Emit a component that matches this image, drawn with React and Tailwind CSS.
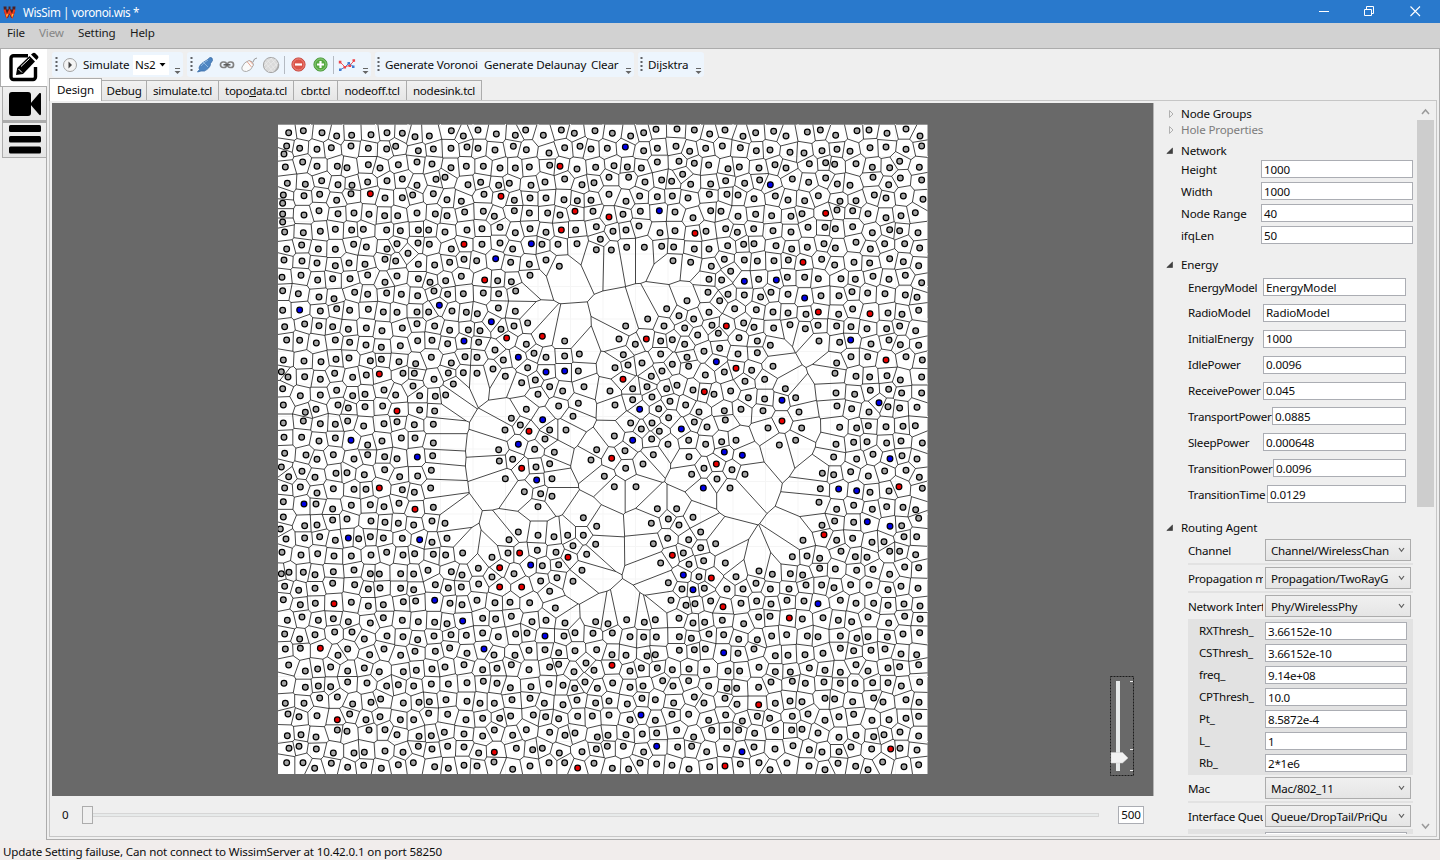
import React from "react";

/* ---------- sensor field data: one block per quadrant, units are thirds of a pixel ---------- */
const QUADRANTS = [
  {
    ox: 0,
    oy: 0,
    nodes: `32,26 76,20 132,26 176,36 221,34 279,32 327,26 373,28 411,38 454,36 520,20 556,36 600,18 655,30 712,34 743,18 796,34 850,18 889,28 951,20
26,66 18,90 65,73 117,76 160,71 219,66 271,73 326,75 353,67 421,80 466,75 519,73 567,69 600,73 651,78 706,67 745,77 813,87 860,71 906,67 939,75
22,129 74,114 117,127 178,127 207,131 271,122 306,132 361,122 417,114 462,120 519,131 565,127 616,127 666,132 712,132 754,129 815,124 846,127,r 897,135 953,130
28,178 82,181 131,170 180,182 222,184 269,174 327,170 373,165 417,184 474,166 501,160 570,182 608,175 662,184 694,178 759,184 801,174 860,165 912,182 948,176
16,213 14,238 78,215 125,211 176,229 219,209 277,209,r 321,222 373,221 404,213 466,209 507,227 550,232 618,211 669,217,r 709,229 756,222 804,222 858,227 898,230 939,229
14,270 14,294 78,273 123,260 180,269 228,267 273,271 320,275 359,275 417,267 472,270 507,275 560,264 616,262 649,277 709,260 754,267 809,267 846,273 891,262,r 945,262
20,324 76,326 127,322 172,316 221,318 256,316 326,318 367,320 421,318 452,318 501,324 567,318 612,314 666,310 712,326 756,314 804,325 850,318,r 893,318 955,308
26,375 71,363 121,375 172,376 227,361 265,369 327,375 357,359 390,388 420,357 454,361 520,375 558,361,r 612,361 666,357 704,375 760,359,b 792,361 840,361 897,359 967,346 955,377
18,408 72,411 117,417 172,425 213,417 261,421 321,406 353,411 421,421 470,423 515,415 558,406 596,410 653,404,b 698,415 754,421 804,408 844,427
12,460 69,454 119,468 164,464 216,464 269,453 321,475 357,456 421,464 456,475 503,470 550,457 620,468,r 659,470 700,473 756,454
14,500 61,509 123,519 168,524 230,505 269,511 326,507 370,511 419,515 468,501 509,511 556,509 616,507 662,509 713,501
14,559 65,558,b 127,561 176,554 215,559 271,556 316,564 357,565 417,564 452,564 484,544,b 522,561 565,565 598,569 661,552 712,562
20,608 80,600 123,605 164,608 211,616 265,612 312,620 373,612 417,599 470,606 515,619 571,618 606,620 640,593,b 669,616 708,606 749,597
26,648 65,649 115,657 172,648 215,655 264,663 310,670 367,665 419,650 462,649 509,659 558,651,b 602,655 686,642,r 793,637,r 745,661 860,651
16,708 78,711 129,713 174,706 213,702 277,710 310,706 363,713 413,719 460,700 520,717 561,698 597,700 651,678 676,708 721,700,b 768,688 804,700 860,696 904,690
10,743 30,759 80,758 127,766 170,748 224,760 265,753 304,750,r 375,748 409,748 468,766 511,747 556,746 597,748 645,735 682,757 749,731 804,744,b 860,741,b 901,741
14,794 67,815 127,813 176,799 224,815 261,811 318,798 353,813 405,786 425,815 472,817 503,813 526,780 731,776 772,768 780,811 815,788 854,801 918,788
16,843 82,865 114,856 180,843 211,852 261,848 314,846 357,861,r 425,858 470,861 745,856 842,846 901,838 700,883
16,897 76,891 127,899 172,901 209,891 257,906 318,899 357,893 409,902 466,901 681,918 727,903 753,922,r 794,887,b 815,918 864,918 885,877
18,940 71,940 123,951 172,942 219,949,b 269,963 312,951 370,942 411,942 466,957 721,961,b 801,945`,
  },
  {
    ox: 975,
    oy: 0,
    nodes: `28,28 83,36 122,26 159,16 222,15 274,18 320,30 366,18 420,37 458,26 512,22 549,36 613,24 652,18 698,34 762,20 798,18 852,28 909,15 951,36
13,73 67,69,b 122,80 163,73 219,67 260,82 308,73 358,66 412,71 460,80 501,78 561,85 603,87 657,80 702,76 741,82 801,71 849,69 909,76 956,66
33,125 73,129 115,132 163,114 228,112 274,118 317,123 375,134 409,129 468,132 516,122 549,132 619,119 668,116 695,121 759,119 808,130 860,131 890,112 949,130
18,160 77,160 126,174 176,168 206,172 239,151 263,181 323,180 368,170 425,178 470,168 502,182,b 568,165 617,175 668,162 703,180 741,184 810,160 857,182 892,162 956,168
18,211 69,232 110,216 163,218 208,216 255,222 319,211 372,211 405,213 453,224 517,216 555,228 605,230 646,215 711,232 759,230 814,213 849,222 901,216 960,226
18,279,r 60,271 112,262 169,260,b 216,264 270,281 323,260 354,262 405,277 458,271 506,275 564,277 597,269 668,268,r 702,258 749,260 795,269 849,281 894,275 937,266
30,322 69,318 108,306 171,326 216,320 276,328,r 309,322 368,314 403,325 452,314 510,320 564,324 615,310 666,310 697,314 749,308 808,326 860,317 890,320 945,326
25,378 71,370 124,370 176,367 212,369 274,375 318,375 374,365 422,361 453,359 519,365 566,375 613,370 663,359 697,372 759,355 802,375 845,359 905,359 950,372
210,410 263,415 325,427 364,406 424,408 463,411 513,410 556,408 600,415,r 656,406 695,423 753,415 800,417 860,404 901,413 947,425 383,442
318,466 356,468 424,472,b 467,466 520,468,b 553,460 605,460 646,464 714,464 757,466 810,457 858,466 907,454 956,476
315,505 375,511 350,530 424,513 473,519 504,505 555,511 605,522,b 654,515 708,515 747,503 794,507 846,509 907,513 942,520 252,530
191,554 228,575 272,585 318,565 395,554 460,557 510,564 555,567 609,571 646,564,r 707,571 749,555 801,569,r 855,567 897,571 947,559 134,585
68,606 183,606 245,612 327,604 346,628 370,606,r 422,597 453,610 512,612 561,602 607,614 645,604 701,606 744,608 792,614 851,614 890,606 938,620 284,633
48,645 97,661 130,645,r 173,651 208,647 245,661 303,682 350,673 408,641 463,651 502,664 648,651 710,655 743,648,b 804,660 858,648 892,662 947,664
61,692 75,723 36,731 117,717 173,690 208,721 252,700 257,727 340,713,b 405,690 463,686 510,727 701,717 744,698 794,698 849,708,r 909,698 958,708
60,766,r 145,757 177,741 307,753 364,744 399,733,r 446,739 426,772 485,766 696,748 759,757 800,759 852,755 892,768 956,759
21,801 89,794 132,788 191,794 222,784 270,798 304,803,r 333,811 383,801 547,794 699,807 755,811 802,799 857,796 896,807 956,807
36,843 89,827 147,819 201,832 248,843 110,856,b 167,854 288,864 364,860 414,856 436,821 485,825 537,829,b 578,821 480,860 588,864 702,846 746,854 798,864 828,836,b 855,848 890,852 942,850
83,897 115,915 147,897 197,881 169,922 235,915,b 274,894 312,909 367,888 495,912 537,891,r 596,912 710,910 761,912 796,905 849,908 900,907 937,905
34,936 89,949,b 146,945 195,961 257,949 308,961 356,953 399,949 529,963 578,949 699,961 752,955 792,953 851,957 894,951 958,957`,
  },
  {
    ox: 0,
    oy: 975,
    nodes: `20,13 84,18 117,31 166,17 228,30 269,17 320,23 357,29 418,24,b 464,20 662,2 664,36 704,31 731,58,r 770,1 774,54 815,44 829,10 956,2 939,33
10,54 32,83 72,67 111,85 174,73 207,71 259,77 320,62 365,83 419,81 460,64 682,89 776,93,b 822,89
20,117 67,114 117,132 166,119 228,121 264,121 304,117,r 373,122 409,130 458,117 739,128 788,134 822,142
16,158 78,165,b 114,165 164,180 220,169 277,167 318,173 363,163 411,181,r 466,175 780,173
16,204 7,240 80,230 117,228 164,213 207,210 279,216 321,220 361,223 407,228 462,216 501,223 721,249 916,206 956,232
24,270 80,267 125,263 172,274 211,267,b 242,269 277,263 316,267 373,268 425,272,b 462,280 507,268 693,272 780,259 828,263 869,259 916,259 885,290 953,286
12,310 69,318 119,314 168,321 220,321 279,318 326,310 375,318 410,314 466,316 503,318 554,312 642,325 690,312 725,312,r 778,304 834,310 870,325,r 926,316
10,374 33,370 76,370 111,377 166,368 228,363 277,374 304,375 368,374 407,375 450,364 520,368 552,378 601,358 665,356,r 642,384 708,374 758,348,b 793,350 842,347 912,364
20,412 62,424 111,418 164,403 230,407 271,420 306,417 368,418 407,422 472,407 511,417 550,414 602,405 665,414,r 731,414,r 788,396 837,386 885,397
16,452 67,467 112,463 168,464,r 220,460 271,471 316,467 376,458 413,456 470,454,b 516,463 552,467 597,454 651,461 696,460 755,461 815,427 832,477
28,514 72,504 121,514 166,509 211,518 277,522 316,506 373,514 421,518 470,520 507,524 554,516,b 614,508 653,510 700,502 762,518 804,514 861,522 953,518
20,555 65,570 111,557 170,549 222,549 259,570 327,561 375,563 419,572 468,561 519,557 565,559 614,552 661,563 713,555 747,552 801,561,b 858,561 891,551 945,553
22,600 67,598 127,598,r 180,619 209,600 275,617 318,600 368,619 411,607 472,607 515,597 567,613 618,600,b 648,618 711,619 753,604 801,602 842,611 891,605 956,602
32,648 82,666 119,660 158,654 209,666 259,657 304,668 376,668 415,664 462,660 501,654 558,647 614,662 657,658 700,647 753,662 815,654 842,646 888,668 924,642 948,664
18,703 82,715 121,711 158,713 209,699 267,702 326,711 361,707 407,711 460,705 511,705 567,701 616,697 657,703 697,716 759,713 813,705 855,709 890,718 921,699 958,718
22,763 78,763 125,747 178,744 224,765 279,760 308,750 376,762 423,760 454,758 504,752 567,757 606,763 649,763 702,752 756,748 799,763 855,767 897,753 953,762
30,795 63,803 117,800 178,812,r 215,795 264,812 306,803 367,812 407,812 452,793 509,796 564,812 614,808 665,808 698,801 766,798 803,803 842,809 899,802 943,801
28,860 69,857 114,864 178,843 207,847 273,843 321,842 357,857 423,862 460,860 499,850 558,855 614,861 649,843 704,859 745,842 815,850 861,859 891,852 958,864
33,898 63,892 115,900 166,912 228,912 259,910 321,906 375,910 421,892 462,900 509,892 558,894 602,912 649,910,r 715,898 764,902 793,898 844,912 912,908 955,900
26,941 75,941 110,958 160,943 209,955 257,949 310,958 361,947 406,941 470,953 511,958 558,949 597,951 648,939 704,961 756,951 813,941 860,941 899,957,r 948,943`,
  },
  {
    ox: 975,
    oy: 975,
    nodes: `26,28,r 66,5 68,58 151,17 120,45 4,82 34,113 99,113 258,23 303,58 266,76 340,45,r 342,90 364,9,b 418,19,b 387,62 426,76 381,117 301,117,b 692,24 761,30 810,16 861,29,b 897,20 942,30
658,73 692,77 743,68 796,81 845,66 909,64 949,85
652,119 707,120,b 761,125,b 801,130 858,126 888,113,r 958,118
648,160 701,181 752,169 808,181 851,173 900,175 938,182 947,208
163,179 221,179 270,205 196,210 228,228 145,223
657,229 695,216 752,220 793,218,b 861,232,b 896,230 663,257,r
194,268 257,272 293,249 293,296 338,284 151,284 208,319,r 241,312 258,346 302,335 173,342 367,342 241,378,b 288,383 325,387,r 399,383 196,401 237,420 270,422,b 304,418 372,420 420,420
600,274 701,274 749,268 807,280 843,278 903,263 941,263
568,323 612,321 650,328 714,307 757,323 792,325 860,307 890,307 938,317
468,366 508,376 562,374 599,378 650,358 697,360 761,364 810,361 860,376 905,354 947,356
459,403 502,420 558,420 609,408 656,408 693,416 743,407 798,408 855,422 894,412 945,418
204,454 249,469 276,464 323,456 360,473,r 414,463 461,456 504,465 552,454 603,456 645,464,b 712,454 759,463 812,463 855,469 903,465 951,471
15,524 71,512 124,520 157,512 228,508 270,522 305,520 358,514 422,524 467,504 501,502 559,507,r 598,510 660,506 706,514 746,518 795,504 857,522 905,502 951,510
28,552 81,563 122,564 160,564 229,563 265,568 318,555 362,557 407,571 463,572 506,561 551,557 613,561 645,563 712,561 762,568 795,563 853,564 900,555 950,551
27,617 69,619 132,621 157,617 229,604 274,602 307,600 362,611,b 405,613 453,600 517,620 555,619 606,617 660,613 712,598 752,605 804,604 846,600 894,615 941,617
27,649,r 81,666 115,657 163,657 208,662 258,660 311,662 375,666 410,666 468,655 517,668 562,669 619,657 666,664 712,670 759,647 795,666 855,657 890,653 947,647
29,702 81,715 120,711 179,695 210,711 257,695 317,711 372,718 401,718 467,715 504,699 568,697 607,703 663,699 712,703 756,703 809,701 855,701 895,711 950,699
18,756 73,765 117,748 157,752 212,762 274,744 303,762 366,748 402,766 467,767,r 517,763 561,756 597,758 666,748 695,750 749,758 812,747 840,759 909,752 948,760
18,798 81,812 114,798,b 157,814 207,796 257,796 317,814 368,798 418,816 463,802 500,808 568,802 615,795 666,814 708,803 752,796 807,814 858,812 909,808 947,802
15,859 69,857 118,855 161,852 221,843 272,864 326,844 372,843 407,843 455,853 517,843 566,843 597,841 645,852 708,865 759,859 812,863 843,857 891,849 947,861
13,892 61,892 122,909 161,892,b 224,894 266,892 311,908 371,898 417,908,b 453,894 516,900 570,890 619,902 657,909 708,908 744,894 806,900 863,900,r 891,898 942,903
28,958 77,960 111,942 161,945 207,949 258,960 320,953 366,951,r 412,945 468,941 501,962 552,942 618,951 666,962 705,943 758,952 795,962 839,939 903,953 947,947`,
  },
];

const FILL = { r: "#e80000", b: "#0000e8" };

const NODES = QUADRANTS.flatMap(({ ox, oy, nodes }) =>
  nodes.split(/\s+/).map((t) => {
    const [x, y, kind] = t.split(",");
    return { x: (ox + Number(x)) / 3, y: (oy + Number(y)) / 3, fill: FILL[kind] || "#a6a6a6" };
  })
);

const FIELD = { x0: 0, y0: 0.7, x1: 649.5, y1: 650 };

/* Voronoi edges by clipping the field with the bisector of every pair of nodes. */
function voronoiPath(pts) {
  let d = "";
  pts.forEach((p, i) => {
    let poly = [
      { x: FIELD.x0, y: FIELD.y0, n: -1 },
      { x: FIELD.x1, y: FIELD.y0, n: -1 },
      { x: FIELD.x1, y: FIELD.y1, n: -1 },
      { x: FIELD.x0, y: FIELD.y1, n: -1 },
    ];
    let reach = Infinity;
    for (let j = 0; j < pts.length; j++) {
      if (j === i) continue;
      const q = pts[j];
      const nx = q.x - p.x;
      const ny = q.y - p.y;
      const dd = nx * nx + ny * ny;
      if (dd > reach || dd < 0.01) continue;
      const c = (q.x * q.x + q.y * q.y - p.x * p.x - p.y * p.y) / 2;
      const s = poly.map((v) => v.x * nx + v.y * ny - c);
      if (!s.some((v) => v > 0)) continue;
      const out = [];
      for (let k = 0; k < poly.length; k++) {
        const m = (k + 1) % poly.length;
        const a = poly[k];
        const b = poly[m];
        if (s[k] <= 0) out.push(a);
        if (s[k] <= 0 !== s[m] <= 0) {
          const t = s[k] / (s[k] - s[m]);
          out.push({ x: a.x + (b.x - a.x) * t, y: a.y + (b.y - a.y) * t, n: s[k] <= 0 ? j : a.n });
        }
      }
      poly = out;
      reach = 4 * Math.max(...poly.map((v) => (v.x - p.x) ** 2 + (v.y - p.y) ** 2));
    }
    poly.forEach((a, k) => {
      if (a.n <= i) return;
      const b = poly[(k + 1) % poly.length];
      d += `M${a.x.toFixed(2)} ${a.y.toFixed(2)}L${b.x.toFixed(2)} ${b.y.toFixed(2)}`;
    });
  });
  return d;
}

const EDGES = voronoiPath(NODES);
const GRID = Array.from({ length: 19 }, (_, i) => (i + 1) * 32.5)
  .map((v) => `M${v} 0V650M0 ${v}H650`)
  .join("");

function Field() {
  return (
    <svg width="650" height="650" viewBox="0 0 650 650" className="block">
      <rect x={FIELD.x0} y={FIELD.y0} width="649.5" height="649.3" fill="#fff" />
      <path d={GRID} stroke="#f5f5f5" fill="none" />
      <path d={EDGES} stroke="#000" strokeWidth="0.72" fill="none" />
      {NODES.map((n, i) => (
        <circle key={i} cx={n.x} cy={n.y} r="2.85" fill={n.fill} stroke="#000" strokeWidth="1.25" />
      ))}
    </svg>
  );
}

/* ---------- chrome ---------- */
function TitleBar() {
  return (
    <div className="flex h-[23px] shrink-0 items-center bg-[#2979cc] text-white">
      <svg width="13" height="14" viewBox="0 0 13 14" className="ml-[3px]">
        <path d="M.5 1.500h3v3h2v-3h2v3h2v-3h3L12 6l-2 6.500-2 .5-1.500-4L5 13l-2-.5L1 6z" fill="#4a2024" />
        <path d="M1.500 4.500l2.300 7L6.500 6l2.700 5.500 2.300-7" stroke="#ee3a1c" strokeWidth="2" fill="none" />
        <path d="M3.500 11.500l1-2.500M9 11.500l.8-2.500" stroke="#ffc23a" strokeWidth="1.300" />
      </svg>
      <span className="ml-[7px] text-[11.7px] tracking-[-0.4px]">WisSim | voronoi.wis *</span>
      <svg width="104" height="14" viewBox="0 0 104 14" className="mr-[18px] ml-auto -translate-y-px" fill="none" stroke="#fff">
        <path d="M1 7.500h10" />
        <path d="M46.500 5.500h7v6h-7zM48.500 5.500v-3h7v7h-2" />
        <path d="M92.500 2.500l9.500 9.500M102 2.500l-9.500 9.500" strokeWidth="1.100" />
      </svg>
    </div>
  );
}

function MenuBar() {
  return (
    <div className="flex h-[25px] shrink-0 bg-[#d2d2d2] pt-[2px] pl-[7px] text-[#1a1a1a]">
      <span className="w-8">File</span>
      <span className="w-[39px] text-[#868686]">View</span>
      <span className="w-[52px]">Setting</span>
      <span>Help</span>
    </div>
  );
}

function SideTabs() {
  return (
    <div className="flex w-[46px] shrink-0 flex-col">
      <div className="relative z-10 flex h-[39px] w-[47px] items-start justify-center border border-r-0 border-[#acacac] bg-white pt-[2px] pr-px">
        <svg width="32" height="32" viewBox="0 0 32 32">
          <path d="M20 4.700H5.500a2.500 2.500 0 0 0-2.500 2.500V26a2.500 2.500 0 0 0 2.500 2.500H25a2.500 2.500 0 0 0 2.500-2.500V16" fill="none" stroke="#000" strokeWidth="3.400" />
          <path d="M8 24l1.200-7L21.500 5l5.500 5.500L15 23z" fill="#000" />
          <path d="M23 3.500L25 2q1.200-.8 2.300.2l2.700 2.800q1 1.200 0 2.300L28.500 9z" fill="#000" />
          <path d="M10.500 18l3.500 3.500M13 15.500L21.500 7.500" stroke="#fff" strokeWidth="1" />
        </svg>
      </div>
      <div className="ml-[2px] flex h-[34px] items-center justify-center border border-t-0 border-r-0 border-[#acacac] bg-gradient-to-b from-[#f0f0f0] to-[#e5e5e5]">
        <svg width="32" height="26" viewBox="0 0 32 26">
          <rect x="0" y="1" width="22" height="24" rx="3" />
          <path d="M21 13L30.500 2q1.500-.5 1.500 1v20q0 1.500-1.500 1z" />
        </svg>
      </div>
      <div className="ml-[2px] flex h-[37px] items-start justify-center border border-t-2 border-r-0 border-[#acacac] bg-gradient-to-b from-[#f0f0f0] to-[#e5e5e5] pt-px">
        <svg width="32" height="30" viewBox="0 0 32 30">
          <rect y="1" width="32" height="7" rx="1.500" />
          <rect y="12" width="32" height="6.500" rx="1.500" />
          <rect y="22.500" width="32" height="7" rx="1.500" />
        </svg>
      </div>
    </div>
  );
}

function Grip() {
  return (
    <svg width="3" height="14" viewBox="0 0 3 14" className="mb-[1px] shrink-0">
      <path d="M1.500 0v14" stroke="#5f6165" strokeWidth="2" strokeDasharray="2 2" />
    </svg>
  );
}

function Overflow() {
  return (
    <svg width="7" height="8" viewBox="0 0 7 8" className="mr-[2px] ml-auto shrink-0 translate-y-[6px]">
      <path d="M1 1.500h5" stroke="#666" />
      <path d="M.5 4h6L3.500 7z" fill="#666" />
    </svg>
  );
}

function Group({ className, children }) {
  return <div className={"flex h-[25px] shrink-0 items-center rounded-[3px] bg-[#edf5fd] " + className}>{children}</div>;
}

function Toolbar() {
  return (
    <div className="flex h-[29px] shrink-0 pt-[3px]">
      <Group className="ml-[5px] w-[131px] pl-[3px]">
        <Grip />
        <svg width="16" height="16" viewBox="0 0 16 16" className="ml-[4px]">
          <circle cx="8" cy="8" r="6.500" fill="#f4f4f4" stroke="#a4a4a4" />
          <path d="M6.500 4.500L10 8l-3.500 3.500z" fill="#444" />
        </svg>
        <span className="ml-[5px] w-[50px]">Simulate</span>
        <span className="flex h-5 w-9 items-center bg-white pl-[2px]">
          Ns2
          <svg width="7" height="4" viewBox="0 0 7 4" className="ml-auto mr-[3px]">
            <path d="M.5 0h6l-3 3.500z" />
          </svg>
        </span>
        <Overflow />
      </Group>
      <Group className="ml-[4px] w-[184px] pl-[3px]">
        <Grip />
        <svg width="18" height="18" viewBox="0 0 18 18" className="ml-[3px]">
          <path d="M1.500 16l2-2.500C2 11 5 8 7 6.500L11 4l3-2.500 2 .5.500 2.500-2 3c.3 3-3 6-6 7.500L5 15z" fill="#4f86c3" stroke="#376ba6" strokeWidth=".8" />
          <path d="M7 6l5 5M5 10q3-4 7-6" stroke="#8fb8e0" fill="none" />
        </svg>
        <svg width="16" height="10" viewBox="0 0 16 10" className="ml-[5px]" fill="none" stroke="#808080">
          <rect x="1.500" y="2" width="6" height="5.500" rx="2.500" strokeWidth="1.700" />
          <rect x="8.500" y="2" width="6" height="5.500" rx="2.500" strokeWidth="1.700" />
          <path d="M4.500 4.800h7" stroke="#555" strokeWidth="1.400" />
        </svg>
        <svg width="18" height="18" viewBox="0 0 18 18" className="ml-[5px]">
          <path d="M13 6q1-4 4-4" stroke="#999" fill="none" />
          <path d="M2 11Q4 6 9 4.500l3.500 1.500 1 3Q11 15 6.500 15.500 1 15.500 2 11z" fill="#fafafa" stroke="#aaa" />
          <path d="M7 5.500l4.500 5.500M9.500 4.500l3.500 4" stroke="#e39a85" strokeWidth=".9" />
        </svg>
        <svg width="18" height="18" viewBox="0 0 18 18" className="ml-[4px]">
          <circle cx="9" cy="9" r="7.600" fill="#dadada" stroke="#a6a6a6" />
          <path d="M3 6l8 10M5 3.500l9 11M9 2l6.500 9M2 10L10 1.500M3 13L14 3.500M6 16l10-9" stroke="#ececec" strokeWidth=".7" />
          <path d="M13 15q4-3 3.500-7" stroke="#aaa" fill="none" strokeWidth="1.500" />
        </svg>
        <span className="ml-[4px] h-[18px] w-px bg-[#b4bac2]" />
        <svg width="15" height="15" viewBox="0 0 15 15" className="ml-[6px]">
          <circle cx="7.500" cy="7.500" r="6.600" fill="#db5347" stroke="#c94a42" />
          <circle cx="7.500" cy="7.500" r="5.500" fill="none" stroke="#ee9189" strokeWidth=".8" />
          <path d="M4 7.500h7" stroke="#fff" strokeWidth="2.200" />
        </svg>
        <svg width="15" height="15" viewBox="0 0 15 15" className="ml-[7px]">
          <circle cx="7.500" cy="7.500" r="6.600" fill="#55a940" stroke="#4b9a3c" />
          <circle cx="7.500" cy="7.500" r="5.500" fill="none" stroke="#9bd48b" strokeWidth=".8" />
          <path d="M4 7.500h7M7.500 4v7" stroke="#fff" strokeWidth="2.200" />
        </svg>
        <span className="ml-[5px] h-[18px] w-px bg-[#b4bac2]" />
        <svg width="18" height="14" viewBox="0 0 18 14" className="ml-[4px]">
          <path d="M2 4l5 5 5-2 4-4" stroke="#f0595c" fill="none" />
          <path d="M2 12l5-3 4-4 4 3.500" stroke="#4a86d8" fill="none" />
          <path d="M.8 2.800h2.600v2.600H.8zM10.500 6.500h2.600v2.600h-2.600zM14.500 1.200h2.600v2.600h-2.600zM5.500 8h2.600v2.600H5.500z" fill="#ee4348" />
          <path d="M1 10.500h2.500V13H1zM9.500 4H12v2.500H9.500zM14 7.500h2.500V10H14z" fill="#3f7bd0" />
        </svg>
        <Overflow />
      </Group>
      <Group className="ml-[4px] w-[259px] pl-[2px]">
        <Grip />
        <span className="ml-[5px] w-[99px] tracking-[-0.2px]">Generate Voronoi</span>
        <span className="w-[107px] tracking-[-0.15px]">Generate Delaunay</span>
        <span>Clear</span>
        <Overflow />
      </Group>
      <Group className="ml-[4px] w-[66px] pl-[2px]">
        <Grip />
        <span className="ml-[5px]">Dijsktra</span>
        <Overflow />
      </Group>
    </div>
  );
}

function Tab({ className, children }) {
  return (
    <span
      className={
        "flex h-[20px] items-center justify-center self-end border border-b-0 border-l-0 border-[#acacac] bg-gradient-to-b from-[#f1f1f1] to-[#e6e6e6] pt-px tracking-[-0.3px] " +
        className
      }
    >
      {children}
    </span>
  );
}

function Tabs() {
  return (
    <div className="relative z-10 ml-[2px] flex h-[22px] shrink-0 items-start">
      <span className="flex h-[23px] w-[53px] items-center justify-center border border-b-0 border-[#acacac] bg-white">Design</span>
      <div className="flex h-[22px]">
        <Tab className="w-[45px]">Debug</Tab>
        <Tab className="w-[72px]">simulate.tcl</Tab>
        <Tab className="w-[75px]">
          <span>
            topo<u>d</u>ata.tcl
          </span>
        </Tab>
        <Tab className="w-[44px]">cbr.tcl</Tab>
        <Tab className="w-[69px]">nodeoff.tcl</Tab>
        <Tab className="w-[75px]">nodesink.tcl</Tab>
      </div>
    </div>
  );
}

function ZoomSlider() {
  return (
    <svg width="25" height="100" viewBox="0 0 25 100" className="absolute top-[573px] left-[1058px]">
      <rect x=".5" y=".5" width="23" height="99" fill="none" stroke="#1c1c1c" strokeDasharray="2 1" />
      <rect x="6" y="5" width="4" height="90" fill="#e7eaea" />
      <path d="M20 5.500h3M20 73.500h3M20 94.500h3" stroke="#f0f0f0" />
      <path d="M1 76.500h11.500L18 82l-5.500 5H1z" fill="#f2f2f2" stroke="#cfcfcf" strokeWidth=".5" />
    </svg>
  );
}

function Canvas() {
  return (
    <div className="flex w-[1103px] shrink-0 flex-col">
      <div className="relative h-[693px] w-[1102px] shrink-0 border-r border-[#b5b5b5] bg-[#696969] pt-[21px] pl-[226px]">
        <Field />
        <ZoomSlider />
      </div>
      <div className="flex h-[38px] items-center">
        <span className="w-[30px] pl-[10px]">0</span>
        <span className="h-[18px] w-[11px] border border-[#acacac] bg-[#f0f0f0]" />
        <span className="h-[4px] w-[1006px] border border-l-0 border-[#d6d6d6] bg-[#e7eaea]" />
        <span className="ml-[19px] flex h-[18px] w-[26px] items-center justify-center border border-[#abadb3] bg-white">500</span>
      </div>
    </div>
  );
}

/* ---------- property panel ---------- */
function Header({ open, className, children }) {
  return (
    <div className={"flex items-center " + className}>
      <svg width="8" height="8" viewBox="0 0 8 8" className={open ? "mr-[7px]" : "mr-[5px] ml-[2px]"}>
        {open ? <path d="M6.500 1v5.500H.8z" fill="#404040" stroke="#222" strokeWidth=".5" /> : <path d="M1.500.5v7L5 4z" fill="none" stroke="#b0b0b0" />}
      </svg>
      {children}
    </div>
  );
}

function Input({ className, children }) {
  return <span className={"flex items-center border border-[#abadb3] bg-white pt-px pl-[2px] " + className}>{children}</span>;
}

function Combo({ label, value }) {
  return (
    <div className="flex h-[22px] items-center">
      <span className="w-[75px] shrink-0 overflow-hidden pt-px tracking-[-0.25px] whitespace-nowrap">{label}</span>
      <span className="ml-[2px] flex h-[22px] w-[146px] items-center border border-[#acacac] bg-gradient-to-b from-[#f0f0f0] to-[#e5e5e5] pl-[5px]">
        <span className="w-[121px] overflow-hidden pt-px tracking-[-0.25px] whitespace-nowrap">{value}</span>
        <svg width="7" height="6" viewBox="0 0 7 6" className="ml-auto mr-[5px]">
          <path d="M1 1l2.500 3.300L6 1" stroke="#606060" strokeWidth="1.200" fill="none" />
        </svg>
      </span>
    </div>
  );
}

const Separator = () => <div className="my-[2px] h-[2px] w-[225px] bg-[#e2e2e2]" />;

const NETWORK = [
  ["Height", "1000"],
  ["Width", "1000"],
  ["Node Range", "40"],
  ["ifqLen", "50"],
];

const ENERGY = [
  ["EnergyModel", "EnergyModel", "w-[75px]"],
  ["RadioModel", "RadioModel", "w-[75px]"],
  ["InitialEnergy", "1000", "w-[75px]"],
  ["IdlePower", "0.0096", "w-[75px]"],
  ["ReceivePower", "0.045", "w-[75px]"],
  ["TransportPower", "0.0885", "w-[84px]"],
  ["SleepPower", "0.000648", "w-[75px]"],
  ["TransitionPower", "0.0096", "w-[85px]"],
  ["TransitionTime", "0.0129", "w-[79px]"],
];

const PHY = [
  ["RXThresh_", "3.66152e-10"],
  ["CSThresh_", "3.66152e-10"],
  ["freq_", "9.14e+08"],
  ["CPThresh_", "10.0"],
  ["Pt_", "8.5872e-4"],
  ["L_", "1"],
  ["Rb_", "2*1e6"],
];

function Properties() {
  return (
    <div className="mt-[3px] h-[728px] w-[262px] overflow-hidden pl-[11px]">
      <Header className="h-4">Node Groups</Header>
      <Header className="h-4 text-[#7c7c7c]">Hole Properties</Header>
      <Header open className="h-[22px] pt-[3px]">Network</Header>
      <div className="flex flex-col gap-[4px] pl-[15px]">
        {NETWORK.map(([k, v]) => (
          <div key={k} className="flex h-[18px] items-center">
            <span className="w-[80px] pt-px">{k}</span>
            <Input className="h-[18px] w-[152px]">{v}</Input>
          </div>
        ))}
      </div>
      <Header open className="mt-[11px] h-5">Energy</Header>
      <div className="mt-[3px] flex flex-col gap-[7.900px] pl-[22px]">
        {ENERGY.map(([k, v, w]) => (
          <div key={k} className="flex h-[18px] w-[218px] items-center">
            <span className={"shrink-0 pt-px tracking-[-0.25px] whitespace-nowrap " + w}>{k}</span>
            <Input className="h-[18px] flex-1">{v}</Input>
          </div>
        ))}
      </div>
      <Header open className="mt-[15px] mb-px h-5">Routing Agent</Header>
      <div className="pl-[22px]">
        <Combo label="Channel" value="Channel/WirelessChan" />
        <Separator />
        <Combo label="Propagation model" value="Propagation/TwoRayG" />
        <Separator />
        <Combo label="Network Interface" value="Phy/WirelessPhy" />
        <div className="mt-[2px] flex h-[156px] w-[225px] flex-col gap-[4px] bg-[#e2e2e2] pt-[3px] pl-[11px] tracking-[-0.25px]">
          {PHY.map(([k, v]) => (
            <div key={k} className="flex h-[18px] items-center">
              <span className="w-[66px]">{k}</span>
              <Input className="h-[18px] w-[142px]">{v}</Input>
            </div>
          ))}
        </div>
        <div className="h-[2px]" />
        <Combo label="Mac" value="Mac/802_11" />
        <Separator />
        <Combo label="Interface Queue" value="Queue/DropTail/PriQu" />
        <div className="mt-[2px] h-[12px] w-[225px] bg-[#e2e2e2] pt-[3px] pl-[77px]">
          <Input className="h-[18px] w-[142px]" />
        </div>
      </div>
    </div>
  );
}

function ScrollBar() {
  return (
    <div className="flex h-[732px] w-[17px] flex-col items-center">
      <svg width="9" height="17" viewBox="0 0 9 17">
        <path d="M1 11l3.500-4L8 11" stroke="#9a9a9a" strokeWidth="1.500" fill="none" />
      </svg>
      <div className="h-[387px] w-[17px] shrink-0 bg-[#cdcdcd]" />
      <svg width="9" height="17" viewBox="0 0 9 17" className="mt-auto">
        <path d="M1 6l3.500 4L8 6" stroke="#9a9a9a" strokeWidth="1.500" fill="none" />
      </svg>
    </div>
  );
}

export default function App() {
  return (
    <div className="flex h-[860px] w-[1440px] flex-col overflow-hidden bg-[#efefef] font-['Noto_Sans',sans-serif] text-[11.6px] leading-4 tracking-[-0.15px] text-[#0c0c0c]">
      <TitleBar />
      <MenuBar />
      <div className="flex h-[792px] shrink-0">
        <SideTabs />
        <div className="flex w-[1394px] flex-col border border-[#acacac]">
          <Toolbar />
          <Tabs />
          <div className="ml-[2px] flex h-[737px] w-[1388px] shrink-0 border border-[#c6c6c6] pt-[2px] pl-[2px]">
            <Canvas />
            <Properties />
            <ScrollBar />
          </div>
        </div>
      </div>
      <div className="flex h-5 shrink-0 items-center bg-[#f1edec] pt-[4px] pl-[3px] whitespace-nowrap">
        Update Setting failuse, Can not connect to WissimServer at 10.42.0.1 on port 58250
      </div>
    </div>
  );
}
